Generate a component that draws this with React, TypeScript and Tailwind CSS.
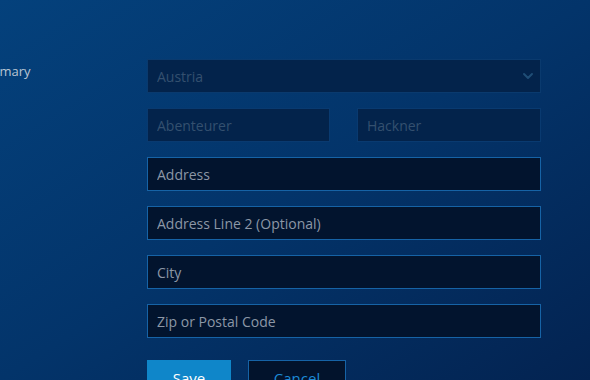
import { ChevronDown } from "lucide-react";

const field =
  "h-[34px] shrink-0 w-full border px-[9px] text-[14px] outline-none bg-[#02142e] border-[#1663a6] text-[#8c97a6] placeholder:text-[#8c97a6]";
const disabledField =
  "h-[34px] shrink-0 w-full border px-[9px] text-[14px] outline-none bg-[#03234b] border-[#0a3a6e] text-[#34506f] placeholder:text-[#34506f]";

export default function App() {
  return (
    <div
      className="w-[590px] h-[380px] overflow-hidden bg-linear-to-br from-[#04417c] via-[#03346a] to-[#032351] flex"
      style={{ fontFamily: '"Open Sans", "Noto Sans", sans-serif' }}
    >
      <div className="w-[147px] shrink-0 pt-[62px]">
        <p className="-ml-[17px] text-[13px] text-[#b9c5d3]">Primary</p>
      </div>

      <div className="w-[394px] pt-[59px] flex flex-col gap-[15px]">
        <div className="relative shrink-0">
          <select
            disabled
            className={disabledField + " appearance-none"}
            defaultValue="AT"
          >
            <option value="AT">Austria</option>
          </select>
          <ChevronDown
            className="absolute right-[5px] top-[9px] w-[16px] h-[16px] text-[#1f4d76]"
            strokeWidth={3}
          />
        </div>

        <div className="flex gap-[27px] shrink-0">
          <input
            disabled
            placeholder="Abenteurer"
            className={disabledField + " !w-[183px] bg-[#021a3c] border-[#093a70] placeholder:text-[#3a4b62]"}
          />
          <input
            disabled
            placeholder="Hackner"
            className={disabledField + " flex-1 bg-[#021a3c] border-[#093a70] placeholder:text-[#3a4b62]"}
          />
        </div>

        <input placeholder="Address" className={field} />
        <input placeholder="Address Line 2 (Optional)" className={field} />
        <input placeholder="City" className={field} />
        <input placeholder="Zip or Postal Code" className={field} />

        <div className="flex gap-[17px] mt-[7px] shrink-0">
          <button className="h-[36px] w-[84px] bg-[#0f86c9] text-white text-[15px]">
            Save
          </button>
          <button className="h-[36px] w-[98px] border border-[#1663a6] bg-[#02132c] text-[#1d8ad6] text-[15px]">
            Cancel
          </button>
        </div>
      </div>
    </div>
  );
}
